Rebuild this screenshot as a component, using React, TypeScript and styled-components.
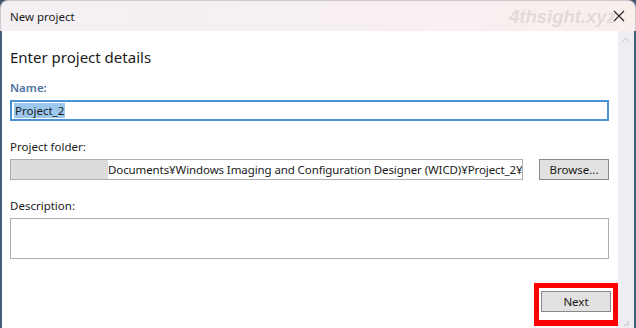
import styled, { createGlobalStyle } from 'styled-components';

const GlobalStyle = createGlobalStyle`
  html, body {
    margin: 0;
    padding: 0;
    width: 636px;
    height: 328px;
    overflow: hidden;
    background: #3b5670;
  }
  * {
    box-sizing: border-box;
  }
  body {
    font-family: 'Noto Sans', 'Segoe UI', sans-serif;
    color: #1a1a1a;
  }
`;

const Window = styled.div`
  width: 636px;
  height: 328px;
  display: flex;
  flex-direction: column;
`;

const TitleBar = styled.div`
  position: relative;
  height: 31px;
  flex: none;
  display: flex;
  align-items: center;
  padding-left: 9px;
  background: linear-gradient(90deg, #f4f0f3 0%, #f7eff3 60%, #f9f0ec 100%);
  border: 1px solid #cfc9cd;
  border-bottom: none;
  border-radius: 8px 8px 0 0;
  font-size: 11.5px;
  color: #1b1b1b;
`;

const Watermark = styled.span`
  position: absolute;
  left: 508px;
  top: 5px;
  font-family: 'Liberation Sans', Arial, sans-serif;
  font-weight: bold;
  font-style: italic;
  font-size: 18.5px;
  color: rgba(190, 175, 175, 0.35);
  pointer-events: none;
`;

const CloseButton = styled.div`
  position: absolute;
  right: 10px;
  top: 9px;
  width: 12px;
  height: 12px;
  display: flex;
`;

const Body = styled.div`
  flex: 1;
  display: flex;
  min-height: 0;
  border-left: 2px solid #40607c;
  border-right: 2px solid #40607c;
`;

const Content = styled.div`
  flex: 1;
  min-width: 0;
  background: #ffffff;
  display: flex;
  flex-direction: column;
  padding: 15px 0 0 8px;
`;

const Fields = styled.div`
  display: flex;
  flex-direction: column;
  padding-right: 9px;
`;

const Heading = styled.div`
  font-size: 15px;
  line-height: 22px;
  margin-bottom: 12px;
`;

const Label = styled.div<{ $active?: boolean }>`
  font-size: 11.5px;
  line-height: 16px;
  font-weight: ${p => (p.$active ? 600 : 400)};
  color: ${p => (p.$active ? '#4f72a0' : '#1a1a1a')};
  margin-bottom: 4px;
`;

const NameInput = styled.div`
  height: 21px;
  border: 2px solid #4b91d8;
  display: flex;
  align-items: center;
  padding-left: 2px;
  font-size: 11.5px;
  margin-bottom: 18px;
`;

const Selected = styled.span`
  background: #9cc8ee;
  line-height: 15px;
  padding: 0 1px;
`;

const FolderRow = styled.div`
  display: flex;
  align-items: center;
  gap: 16px;
  margin-bottom: 18px;
`;

const FolderInput = styled.div`
  flex: 1;
  min-width: 0;
  height: 21px;
  border: 1px solid #adadad;
  display: flex;
  align-items: stretch;
  overflow: hidden;
  font-size: 11.5px;
  white-space: nowrap;
`;

const Redacted = styled.span`
  width: 97px;
  flex: none;
  background: #dddbdc;
`;

const FolderText = styled.span`
  display: flex;
  align-items: center;
  letter-spacing: -0.1px;
  overflow: hidden;
`;

const PushButton = styled.div`
  width: 70px;
  height: 21px;
  flex: none;
  display: flex;
  align-items: center;
  justify-content: center;
  background: #e1e1e1;
  border: 1px solid #8a8a8a;
  font-size: 11.5px;
  color: #1a1a1a;
`;

const DescriptionBox = styled.div`
  height: 41px;
  border: 1px solid #adadad;
`;

const Footer = styled.div`
  display: flex;
  justify-content: flex-end;
  margin-top: 24px;
`;

const Highlight = styled.div`
  border: 5px solid #ff0000;
  border-bottom-width: 6px;
  padding: 3px 2px 8px 2px;
  margin-bottom: -2px;
`;

const ScrollBar = styled.div`
  width: 16px;
  flex: none;
  background: #eeeef2;
  display: flex;
  flex-direction: column;
  justify-content: space-between;
  align-items: center;
  padding: 5px 0 2px;
`;

export default function App() {
  return (
    <>
      <GlobalStyle />
      <Window>
        <TitleBar>
          New project
          <Watermark>4thsight.xyz</Watermark>
          <CloseButton>
            <svg width="12" height="12" viewBox="0 0 12 12">
              <path d="M1 1 L11 11 M11 1 L1 11" stroke="#222" strokeWidth="1.1" fill="none" />
            </svg>
          </CloseButton>
        </TitleBar>
        <Body>
          <Content>
            <Fields>
              <Heading>Enter project details</Heading>
              <Label $active>Name:</Label>
              <NameInput>
                <Selected>Project_2</Selected>
              </NameInput>
              <Label>Project folder:</Label>
              <FolderRow>
                <FolderInput>
                  <Redacted />
                  <FolderText>Documents¥Windows Imaging and Configuration Designer (WICD)¥Project_2¥</FolderText>
                </FolderInput>
                <PushButton>Browse...</PushButton>
              </FolderRow>
              <Label>Description:</Label>
              <DescriptionBox />
            </Fields>
            <Footer>
              <Highlight>
                <PushButton>Next</PushButton>
              </Highlight>
            </Footer>
          </Content>
          <ScrollBar>
            <svg width="8" height="6" viewBox="0 0 8 6">
              <path d="M1 5 L4 2 L7 5" stroke="#c4c4c8" strokeWidth="1" fill="none" />
            </svg>
            <svg width="6" height="6" viewBox="0 0 6 6">
              <path d="M1 5 L5 5 L5 1" stroke="#c4c4c8" strokeWidth="1" fill="none" />
            </svg>
          </ScrollBar>
        </Body>
      </Window>
    </>
  );
}
